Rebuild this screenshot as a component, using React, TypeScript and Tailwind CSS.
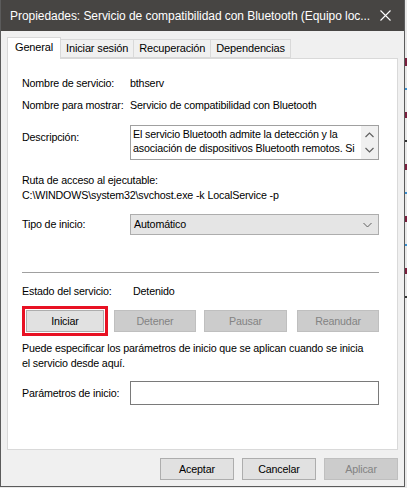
import React from "react";

const tabs = ["General", "Iniciar sesión", "Recuperación", "Dependencias"];

function DlgButton({
  label,
  disabled = false,
  className = "",
}: {
  label: string;
  disabled?: boolean;
  className?: string;
}) {
  return (
    <div
      className={`flex h-[22px] items-center justify-center border ${
        disabled
          ? "border-[#bfbfbf] bg-[#cccccc] text-[#838383]"
          : "border-[#adadad] bg-[#e1e1e1] text-black"
      } ${className}`}
    >
      {label}
    </div>
  );
}

function Chevron({ dir }: { dir: "up" | "down" }) {
  return (
    <svg width="9" height="6" viewBox="0 0 9 6" className="block">
      <path
        d={dir === "up" ? "M0.5 5 L4.5 1 L8.5 5" : "M0.5 1 L4.5 5 L8.5 1"}
        fill="none"
        stroke="#606060"
        strokeWidth="1.2"
      />
    </svg>
  );
}

export default function App() {
  return (
    <div className="flex h-[488px] w-[407px] overflow-hidden bg-[#e9e9e9] font-['Liberation_Sans',Arial,sans-serif] text-[10.7px] tracking-[-0.15px] text-black">
      {/* dialog window */}
      <div className="flex h-[487px] w-[405px] shrink-0 flex-col border-x border-b border-[#5b5b5b] bg-[#f0f0f0]">
        <div className="flex h-[31px] shrink-0 items-center justify-between bg-[#474543] pl-[9px] pr-[9px] text-white">
          <span className="whitespace-nowrap text-[12px] tracking-[-0.05px]">
            Propiedades: Servicio de compatibilidad con Bluetooth (Equipo loc...
          </span>
          <svg width="11" height="11" viewBox="0 0 11 11" className="mr-[4px]">
            <path d="M0.5 0.5 L10.5 10.5 M10.5 0.5 L0.5 10.5" stroke="#ffffff" strokeWidth="1.1" />
          </svg>
        </div>

        <div className="flex flex-1 flex-col px-[6px]">
          {/* tab strip */}
          <div className="relative z-10 mt-[6px] flex h-[21px] items-end">
            {tabs.map((t, i) =>
              i === 0 ? (
                <div
                  key={t}
                  className="-mb-px flex h-[22px] items-center border border-b-0 border-[#d9d9d9] bg-white px-[7px] pb-[2px] text-[11px]"
                >
                  {t}
                </div>
              ) : (
                <div
                  key={t}
                  className="flex h-[19px] items-center border border-l-0 border-[#d9d9d9] bg-[#f0f0f0] px-[5px] text-[11px]"
                >
                  {t}
                </div>
              )
            )}
          </div>

          {/* general page */}
          <div className="flex h-[392px] flex-col border border-[#d9d9d9] bg-white pl-[14px] pr-[18px] pt-[16px]">
            <div className="flex h-4 items-center">
              <span className="w-[108px]">Nombre de servicio:</span>
              <span>bthserv</span>
            </div>
            <div className="mt-[6px] flex h-4 items-center">
              <span className="w-[108px]">Nombre para mostrar:</span>
              <span>Servicio de compatibilidad con Bluetooth</span>
            </div>
            <div className="mt-[12px] flex">
              <span className="w-[108px] pt-[4px] leading-4">Descripción:</span>
              <div className="flex h-[35px] flex-1 border border-[#a0a0a0] bg-white">
                <p className="flex-1 pl-[2px] pt-px leading-[14px]">
                  El servicio Bluetooth admite la detección y la asociación de dispositivos Bluetooth remotos. Si
                </p>
                <div className="flex w-[17px] flex-col items-center justify-between bg-[#f0f0f0] py-[6px]">
                  <Chevron dir="up" />
                  <Chevron dir="down" />
                </div>
              </div>
            </div>

            <div className="mt-[13px] leading-[15px]">Ruta de acceso al ejecutable:</div>
            <div className="leading-[15px]">C:\WINDOWS\system32\svchost.exe -k LocalService -p</div>

            <div className="mt-[11px] flex items-center">
              <span className="w-[108px]">Tipo de inicio:</span>
              <div className="flex h-[21px] flex-1 items-center justify-between border border-[#adadad] bg-[#e5e5e5] pl-[3px] pr-[6px]">
                <span>Automático</span>
                <svg width="9" height="6" viewBox="0 0 9 6">
                  <path d="M0.5 1 L4.5 5 L8.5 1" fill="none" stroke="#606060" strokeWidth="1" />
                </svg>
              </div>
            </div>

            <div className="mt-[37px] h-px bg-[#a0a0a0]" />

            <div className="mt-[10px] flex h-4 items-center">
              <span className="w-[111px]">Estado del servicio:</span>
              <span>Detenido</span>
            </div>

            <div className="mt-[8px] flex h-[28px] items-center">
              <div className="w-[86px] border-[3px] border-[#e81123] p-px">
                <DlgButton label="Iniciar" className="h-[20px]" />
              </div>
              <DlgButton label="Detener" disabled className="ml-[6px] w-[82px]" />
              <DlgButton label="Pausar" disabled className="ml-[8px] w-[83px]" />
              <DlgButton label="Reanudar" disabled className="ml-[10px] w-[82px]" />
            </div>

            <p className="mt-[6px] whitespace-nowrap leading-[15px]">
              Puede especificar los parámetros de inicio que se aplican cuando se inicia
              <br />
              el servicio desde aquí.
            </p>

            <div className="mt-[10px] flex items-center">
              <span className="w-[108px]">Parámetros de inicio:</span>
              <div className="h-[24px] flex-1 border border-[#7a7a7a] bg-white" />
            </div>
          </div>

          {/* dialog buttons */}
          <div className="mt-[8px] flex justify-end gap-[8px]">
            <DlgButton label="Aceptar" className="w-[74px]" />
            <DlgButton label="Cancelar" className="w-[74px]" />
            <DlgButton label="Aplicar" disabled className="w-[74px]" />
          </div>
        </div>
      </div>

      {/* edge of the window behind */}
      <div className="flex flex-1 flex-col gap-[22px] pt-[58px]">
        <div className="h-[8px] w-full bg-[#7a1f3d]" />
        <div className="h-[2px] w-full bg-[#3a8fd0]" />
        <div className="h-[6px] w-full bg-[#7a1f3d]" />
        <div className="h-[2px] w-full bg-[#333333]" />
        <div className="h-[6px] w-full bg-[#7a1f3d]" />
        <div className="h-[2px] w-full bg-[#3a8fd0]" />
        <div className="h-[6px] w-full bg-[#7a1f3d]" />
        <div className="h-[2px] w-full bg-[#3a8fd0]" />
        <div className="h-[6px] w-full bg-[#7a1f3d]" />
        <div className="h-[2px] w-full bg-[#333333]" />
      </div>
    </div>
  );
}
